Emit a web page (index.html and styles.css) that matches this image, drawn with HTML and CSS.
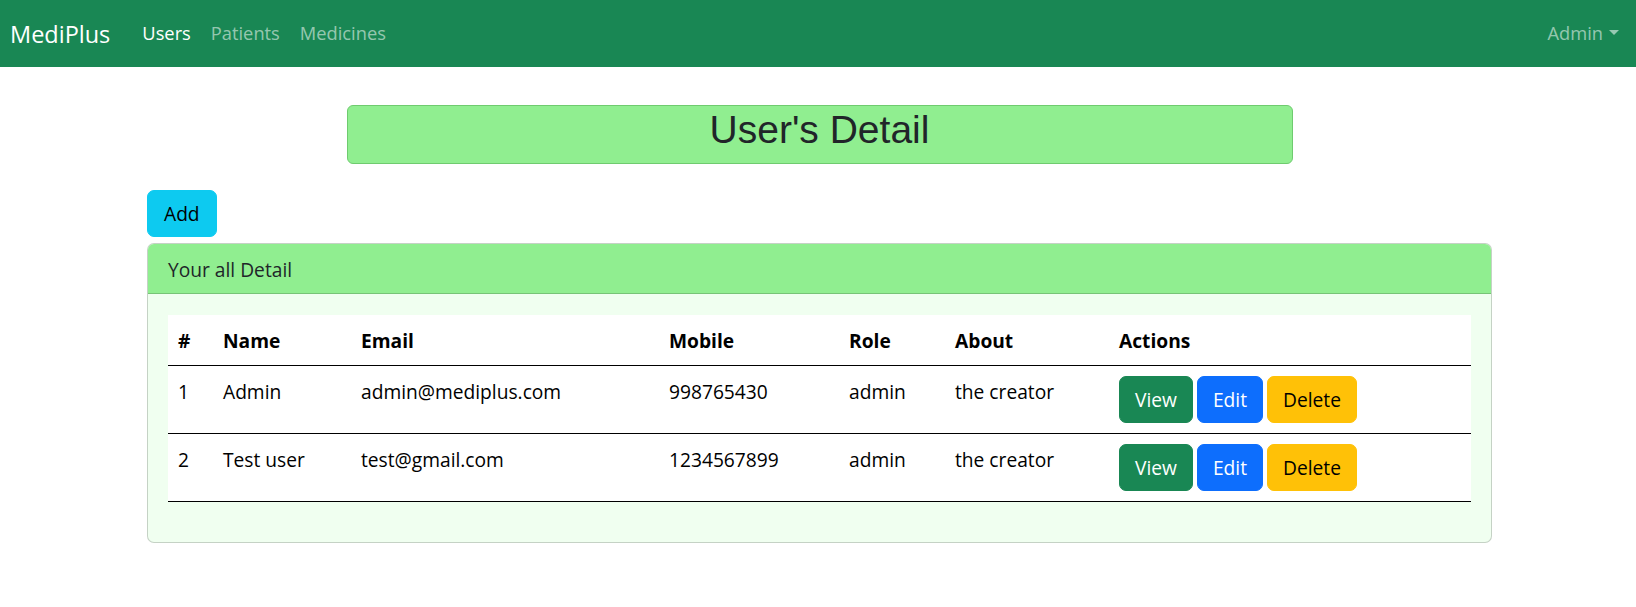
FILE: index.html
```html
<!DOCTYPE html>
<html lang="en">
<head>
<meta charset="utf-8">
<title>MediPlus - Users</title>
<link rel="stylesheet" href="styles.css">
</head>
<body>
<nav class="navbar">
  <a class="brand" href="#">MediPlus</a>
  <ul class="nav-links">
    <li><a class="nav-link active" href="#">Users</a></li>
    <li><a class="nav-link" href="#">Patients</a></li>
    <li><a class="nav-link" href="#">Medicines</a></li>
  </ul>
  <div class="nav-right">
    <a class="nav-link dropdown" href="#">Admin<span class="caret"></span></a>
  </div>
</nav>

<main class="container">
  <div class="title-box">
    <h2 class="title">User's Detail</h2>
  </div>

  <div class="toolbar">
    <a class="btn btn-info" href="#">Add</a>
  </div>

  <section class="card">
    <div class="card-header">Your all Detail</div>
    <div class="card-body">
      <table class="table">
        <colgroup>
          <col class="c-num">
          <col class="c-name">
          <col class="c-email">
          <col class="c-mobile">
          <col class="c-role">
          <col class="c-about">
          <col class="c-actions">
        </colgroup>
        <thead>
          <tr>
            <th>#</th>
            <th>Name</th>
            <th>Email</th>
            <th>Mobile</th>
            <th>Role</th>
            <th>About</th>
            <th>Actions</th>
          </tr>
        </thead>
        <tbody>
          <tr>
            <td>1</td>
            <td>Admin</td>
            <td>admin@mediplus.com</td>
            <td>998765430</td>
            <td>admin</td>
            <td>the creator</td>
            <td class="td-actions">
              <div class="actions">
                <a class="btn btn-success" href="#">View</a>
                <a class="btn btn-primary" href="#">Edit</a>
                <a class="btn btn-warning" href="#">Delete</a>
              </div>
            </td>
          </tr>
          <tr>
            <td>2</td>
            <td>Test user</td>
            <td>test@gmail.com</td>
            <td>1234567899</td>
            <td>admin</td>
            <td>the creator</td>
            <td class="td-actions">
              <div class="actions">
                <a class="btn btn-success" href="#">View</a>
                <a class="btn btn-primary" href="#">Edit</a>
                <a class="btn btn-warning" href="#">Delete</a>
              </div>
            </td>
          </tr>
        </tbody>
      </table>
    </div>
  </section>
</main>
</body>
</html>
```
FILE: styles.css
```css
* {
  box-sizing: border-box;
}

html, body {
  margin: 0;
  padding: 0;
  background: #ffffff;
}

body {
  font-family: "Open Sans", "Noto Sans", "Liberation Sans", sans-serif;
  font-size: 19.2px;
  line-height: 28.8px;
  color: #212529;
}

a {
  text-decoration: none;
}

/* ---------- Navbar ---------- */
.navbar {
  display: flex;
  align-items: center;
  height: 67px;
  padding: 0 17px 0 10px;
  background: #198754;
}

.brand {
  font-size: 23.5px;
  line-height: 36px;
  color: #ffffff;
  margin-right: 32px;
}

.nav-links {
  display: flex;
  gap: 20px;
  margin: 0;
  padding: 0;
  list-style: none;
}

.nav-link {
  font-size: 18.3px;
  line-height: 28px;
  color: rgba(255, 255, 255, 0.55);
}

.nav-link.active {
  color: #ffffff;
}

.nav-right {
  margin-left: auto;
}

.caret {
  display: inline-block;
  margin-left: 6px;
  vertical-align: 4.7px;
  border-top: 5.6px solid rgba(255, 255, 255, 0.55);
  border-left: 5.6px solid transparent;
  border-right: 5.6px solid transparent;
  border-bottom: 0;
}

/* ---------- Page container ---------- */
.container {
  width: 1345px;
  margin-left: 147px;
}

.title-box {
  width: 946px;
  height: 59px;
  margin: 38px auto 0;
  padding: 1px 0 0;
  background: #90ee90;
  border: 1px solid #6fcb6f;
  border-radius: 6px;
  text-align: center;
}

.title {
  margin: 0;
  font-family: "Liberation Sans", Arial, sans-serif;
  font-weight: 400;
  font-size: 39px;
  line-height: 46px;
  color: #212529;
}

.toolbar {
  margin-top: 26px;
  display: flex;
}

/* ---------- Buttons ---------- */
.btn {
  display: inline-block;
  height: 47px;
  padding: 0 15px;
  line-height: 45px;
  font-size: 19.2px;
  border: 1px solid transparent;
  border-radius: 7px;
  text-align: center;
  white-space: nowrap;
}

.btn-info {
  background: #0dcaf0;
  border-color: #0dcaf0;
  color: #000000;
  padding: 0 16px;
}

.btn-success {
  background: #198754;
  border-color: #198754;
  color: #ffffff;
}

.btn-primary {
  background: #0d6efd;
  border-color: #0d6efd;
  color: #ffffff;
}

.btn-warning {
  background: #ffc107;
  border-color: #ffc107;
  color: #000000;
}

/* ---------- Card ---------- */
.card {
  margin-top: 6px;
  border: 1px solid rgba(0, 0, 0, 0.175);
  border-radius: 7px;
  overflow: hidden;
  background: #f0fff0;
}

.card-header {
  height: 50px;
  padding: 3px 20px 0;
  display: flex;
  align-items: center;
  background: #90ee90;
  border-bottom: 1px solid rgba(0, 0, 0, 0.175);
  color: #212529;
}

.card-body {
  padding: 21px 20px 40px;
}

/* ---------- Table ---------- */
.table {
  width: 100%;
  table-layout: fixed;
  border-collapse: collapse;
  background: #ffffff;
  color: #000000;
}

.c-num { width: 45px; }
.c-name { width: 138px; }
.c-email { width: 308px; }
.c-mobile { width: 180px; }
.c-role { width: 106px; }
.c-about { width: 164px; }
.c-actions { width: auto; }

.table th,
.table td {
  text-align: left;
  vertical-align: top;
  line-height: 29px;
  border-bottom: 1px solid #000000;
  white-space: nowrap;
}

.table th {
  padding: 11px 10px 10px;
  font-weight: 700;
}

.table td {
  padding: 11px 10px 9px;
  font-weight: 400;
}

.table td.td-actions {
  padding: 10px;
}

.actions {
  display: flex;
  gap: 4px;
}
```
